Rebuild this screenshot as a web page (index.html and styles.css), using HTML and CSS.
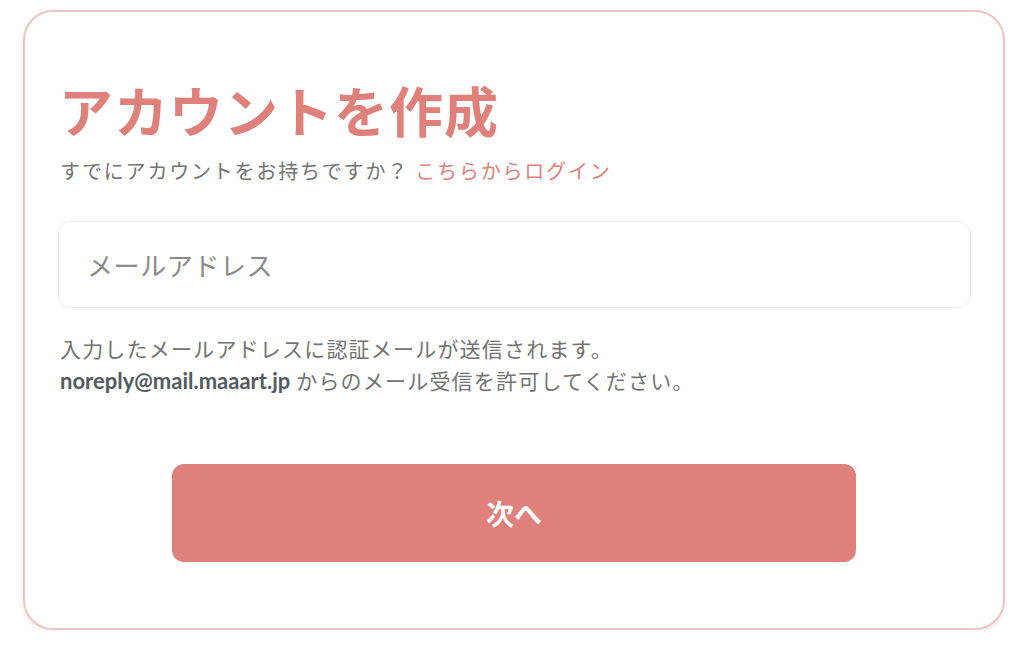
FILE: index.html
```html
<!DOCTYPE html>
<html lang="ja">
<head>
    <meta charset="utf-8">
    <title>アカウントを作成</title>
    <link rel="stylesheet" href="styles.css">
</head>
<body>
    <div class="signup-card">
        <h1>アカウントを作成</h1>
        <p class="login-hint">すでにアカウントをお持ちですか？ <a href="#">こちらからログイン</a></p>
        <form class="signup-form">
            <input type="email" class="email-input" placeholder="メールアドレス">
            <p class="note">入力したメールアドレスに認証メールが送信されます。<br><strong>noreply@mail.maaart.jp</strong> からのメール受信を許可してください。</p>
            <button type="submit" class="next-btn">次へ</button>
        </form>
    </div>
</body>
</html>
```

FILE: styles.css
```css
/* --- colours --- */
:root {
    --accent: #df817a;
    --card-border: #efc4bf;
    --text-grey: #737373;
    --input-border: #ececec;
}

body {
    margin: 0;
    padding: 10px 19px 0 23px;
    background: #ffffff;
    font-family: "Noto Sans CJK JP", "Noto Sans", sans-serif;
}

.signup-card {
    box-sizing: border-box;
    width: 982px;
    padding: 66px 35px 66px 35px;
    border: 2px solid var(--card-border);
    border-radius: 30px;
    box-shadow: 0 3px 4px rgba(0, 0, 0, 0.08);
}

h1 {
    margin: 0 0 0 -1px;
    font-size: 54px;
    line-height: 64px;
    font-weight: 700;
    color: var(--accent);
    letter-spacing: 1px;
}

.login-hint {
    margin: 14px 0 0;
    font-size: 20px;
    line-height: 30px;
    letter-spacing: 1.8px;
    color: var(--text-grey);
}
.login-hint a { color: var(--accent); text-decoration: none; }

.signup-form { margin: 35px 0 0; display: flex; flex-direction: column; }

.email-input {
    box-sizing: border-box;
    width: 913px;
    height: 87px;
    margin-left: -2px;
    padding: 0 28px;
    border: 1px solid var(--input-border);
    border-radius: 12px;
    font-family: inherit;
    font-size: 26px;
    letter-spacing: 0.6px;
    outline: none;
}
.email-input::placeholder { color: #8a8a8a; }

.note {
    margin: 24px 0 0;
    font-size: 21px;
    line-height: 32px;
    letter-spacing: 1.2px;
    color: var(--text-grey);
}
.note strong {
    font-family: Lato, "Noto Sans", sans-serif;
    font-size: 22px;
    font-weight: 700;
    letter-spacing: 0;
    color: #555a60;
}

.next-btn {
    align-self: center;
    width: 684px;
    height: 98px;
    margin-top: 67px;
    border: none;
    border-radius: 12px;
    background: var(--accent);
    color: #ffffff;
    font-family: inherit;
    font-size: 28px;
    font-weight: 700;
    cursor: pointer;
}
```
